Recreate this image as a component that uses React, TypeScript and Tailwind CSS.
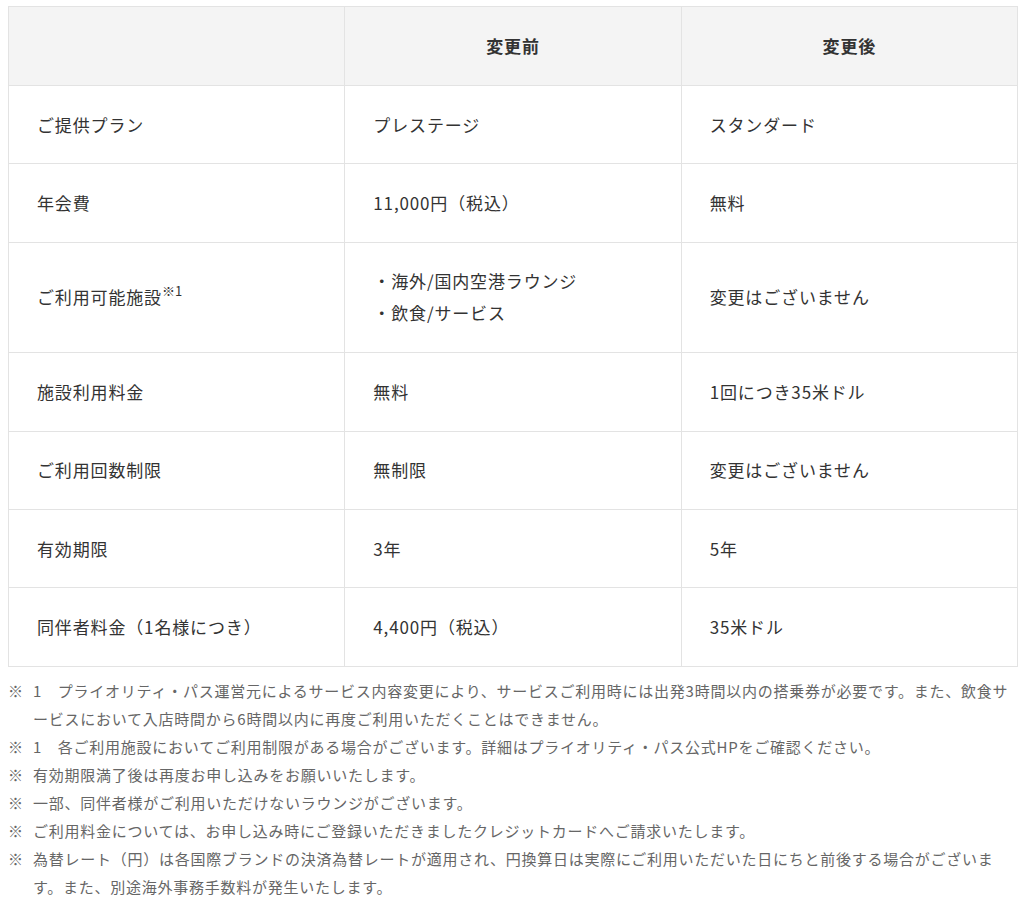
const ROWS: { label: React.ReactNode; before: React.ReactNode; after: string }[] = [
  { label: 'ご提供プラン', before: 'プレステージ', after: 'スタンダード' },
  { label: '年会費', before: '11,000円（税込）', after: '無料' },
  {
    label: (
      <>
        ご利用可能施設<sup className="relative -top-[8px] text-[13px] leading-none tracking-normal">※1</sup>
      </>
    ),
    before: (
      <>
        <div>・海外/国内空港ラウンジ</div>
        <div>・飲食/サービス</div>
      </>
    ),
    after: '変更はございません',
  },
  { label: '施設利用料金', before: '無料', after: '1回につき35米ドル' },
  { label: 'ご利用回数制限', before: '無制限', after: '変更はございません' },
  { label: '有効期限', before: '3年', after: '5年' },
  { label: '同伴者料金（1名様につき）', before: '4,400円（税込）', after: '35米ドル' },
]

const NOTES = [
  '1　プライオリティ・パス運営元によるサービス内容変更により、サービスご利用時には出発3時間以内の搭乗券が必要です。また、飲食サービスにおいて入店時間から6時間以内に再度ご利用いただくことはできません。',
  '1　各ご利用施設においてご利用制限がある場合がございます。詳細はプライオリティ・パス公式HPをご確認ください。',
  '有効期限満了後は再度お申し込みをお願いいたします。',
  '一部、同伴者様がご利用いただけないラウンジがございます。',
  'ご利用料金については、お申し込み時にご登録いただきましたクレジットカードへご請求いたします。',
  '為替レート（円）は各国際ブランドの決済為替レートが適用され、円換算日は実際にご利用いただいた日にちと前後する場合がございます。また、別途海外事務手数料が発生いたします。',
]

const cell = 'border border-[#e3e3e3] px-[28px] py-[22.7px] text-left align-middle'

function App() {
  return (
    <div className="min-h-screen bg-white pl-2 pr-[6px] pt-[6px] font-['Noto_Sans_CJK_JP',sans-serif] text-[#333]">
      <table className="w-full table-fixed border-collapse text-[17px] leading-[32px] tracking-[0.05em]">
        <thead>
          <tr className="bg-[#f4f4f4]">
            <th className="border border-[#e3e3e3] py-[23px]"></th>
            <th className="border border-[#e3e3e3] py-[23px] text-center font-bold">変更前</th>
            <th className="border border-[#e3e3e3] py-[23px] text-center font-bold">変更後</th>
          </tr>
        </thead>
        <tbody>
          {ROWS.map((r, i) => (
            <tr key={i}>
              <td className={cell}>{r.label}</td>
              <td className={cell}>{r.before}</td>
              <td className={cell}>{r.after}</td>
            </tr>
          ))}
        </tbody>
      </table>

      <ul className="mt-[10px] text-[15px] leading-[28px] tracking-[0.05em] text-[#666]">
        {NOTES.map((n, i) => (
          <li key={i} className="flex">
            <span className="w-[25px] shrink-0">※</span>
            <span>{n}</span>
          </li>
        ))}
      </ul>
    </div>
  )
}

export default App
